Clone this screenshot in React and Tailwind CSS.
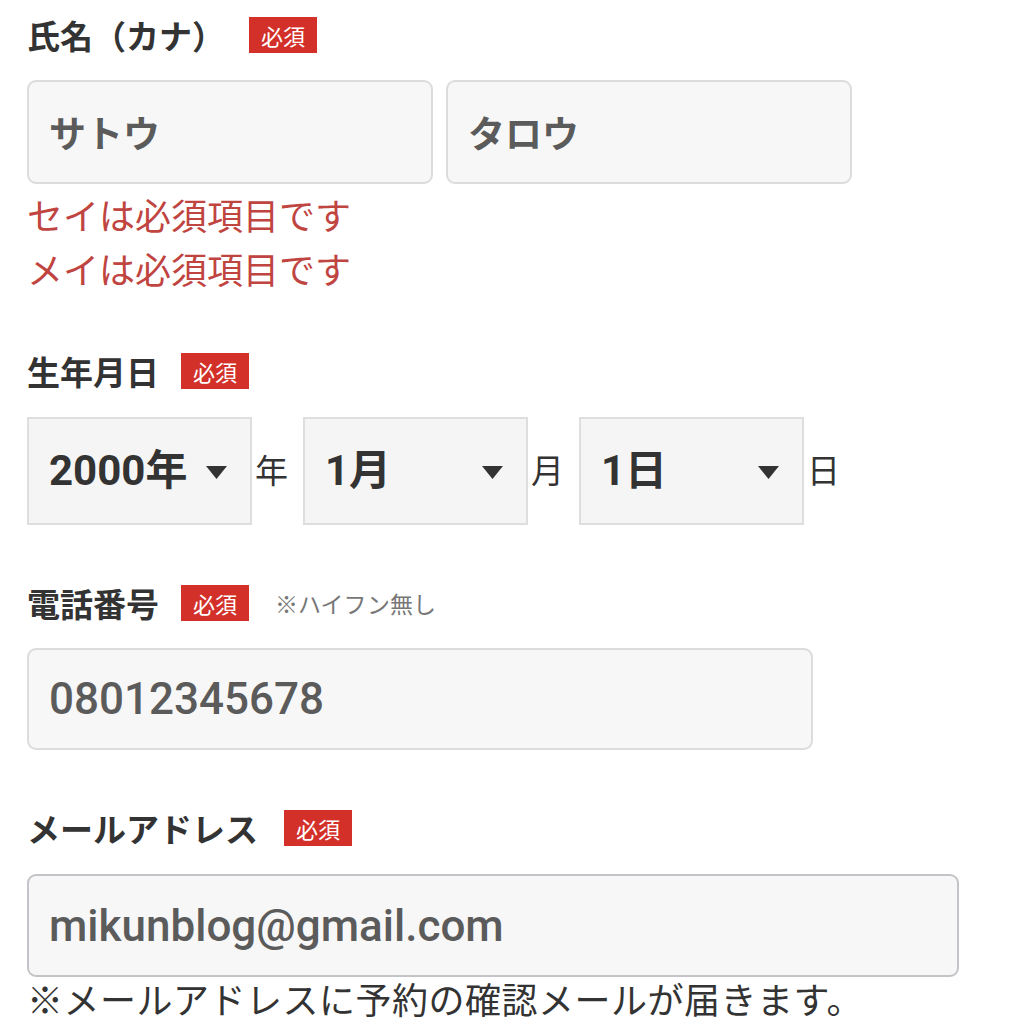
const JP = { fontFamily: '"Noto Sans CJK JP", "Noto Sans", sans-serif' }
const LAT = { fontFamily: 'Roboto, "Noto Sans CJK JP", sans-serif' }

function Badge() {
  return (
    <span className="inline-flex items-center justify-center w-[68px] h-[36px] bg-[#d3302a] text-white text-[22px] leading-none">
      必須
    </span>
  )
}

function Label({ text, gap = 'ml-[24px]', note }) {
  return (
    <div className="flex items-center h-[36px]">
      <span className="text-[33px] font-bold text-[#333] leading-none">{text}</span>
      <span className={gap}><Badge /></span>
      {note && <span className="ml-[26px] text-[23px] text-[#777] leading-none">{note}</span>}
    </div>
  )
}

function TextBox({ value, width, border = 'border-[#dcdcdc]', latin }) {
  return (
    <div
      className={`flex items-center h-full rounded-[9px] border-2 ${border} bg-[#f7f7f7] pl-[20px]`}
      style={{ width }}
    >
      <span
        className={`text-[#5b5b5b] leading-none ${latin ? 'text-[44px] font-medium' : 'text-[37px] font-bold'}`}
        style={latin ? LAT : JP}
      >
        {value}
      </span>
    </div>
  )
}

function Select({ value, unit }) {
  return (
    <div className="flex items-center">
      <div className="relative flex items-center w-[225px] h-[108px] border-2 border-[#dedede] bg-[#f5f5f5] pl-[20px]">
        <span className="text-[42px] font-bold text-[#333] leading-none" style={LAT}>{value}</span>
        <svg className="absolute right-[23px] top-[47px]" width="21" height="13" viewBox="0 0 21 13">
          <path d="M0 0 H21 L10.5 13 Z" fill="#333" />
        </svg>
      </div>
      <span className="w-[51px] pl-[3px] text-[33px] text-[#333] leading-none -mt-[4px]">{unit}</span>
    </div>
  )
}

export default function App() {
  return (
    <div className="bg-white w-[1024px] h-[1024px] overflow-hidden px-[27px] pt-[17px]" style={JP}>
      {/* 氏名 */}
      <Label text="氏名（カナ）" />
      <div className="flex gap-[13px] h-[104px] mt-[27px]">
        <TextBox value="サトウ" width={406} />
        <TextBox value="タロウ" width={406} />
      </div>
      <div className="mt-[3px] text-[36px] leading-[54px] text-[#c0443f]">
        <p>セイは必須項目です</p>
        <p>メイは必須項目です</p>
      </div>

      {/* 生年月日 */}
      <div className="mt-[58px]">
        <Label text="生年月日" gap="ml-[22px]" />
      </div>
      <div className="flex mt-[28px]">
        <Select value="2000年" unit="年" />
        <Select value="1月" unit="月" />
        <Select value="1日" unit="日" />
      </div>

      {/* 電話番号 */}
      <div className="mt-[60px]">
        <Label text="電話番号" gap="ml-[22px]" note="※ハイフン無し" />
      </div>
      <div className="h-[102px] mt-[27px]">
        <TextBox value="08012345678" width={786} latin />
      </div>

      {/* メールアドレス */}
      <div className="mt-[60px]">
        <Label text="メールアドレス" gap="ml-[26px]" />
      </div>
      <div className="h-[103px] mt-[28px]">
        <TextBox value="mikunblog@gmail.com" width={932} border="border-[#c4c4c8]" latin />
      </div>
      <p className="text-[36px] leading-[42px] tracking-[0.5px] text-[#333]">
        ※メールアドレスに予約の確認メールが届きます。
      </p>
    </div>
  )
}
